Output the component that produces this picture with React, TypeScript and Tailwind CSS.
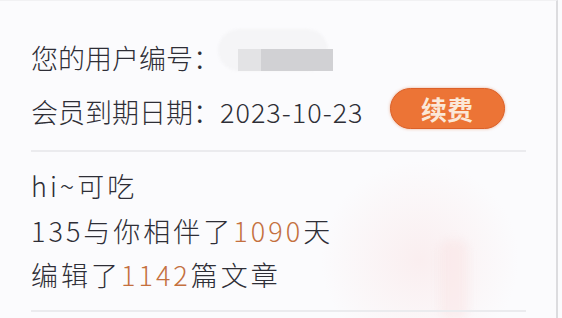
export default function App() {
  const font = { fontFamily: '"Noto Sans CJK SC", "Noto Sans", sans-serif' };
  return (
    <div className="relative w-[562px] h-[318px] overflow-hidden bg-[#fbfbfd]" style={font}>
      <div className="absolute left-[320px] top-[160px] w-[200px] h-[200px] rounded-full bg-[radial-gradient(circle,rgba(248,214,214,0.35)_0%,rgba(250,230,230,0.25)_40%,rgba(251,251,253,0)_70%)]" />
      <div className="absolute left-[440px] top-[240px] w-[28px] h-[80px] rounded-[10px] bg-[rgba(250,220,220,0.35)] blur-[4px]" />
      <div className="relative flex h-full w-[558px] flex-col border-r-2 border-t border-[#dcdcdf] border-t-[#f1f1f3] pl-[31px] pt-[42px] font-light text-[#2e2e36]">
        <div className="flex h-[28px] items-center text-[27px] leading-none">
          <span>您的用户编号：</span>
          <div className="relative top-[3px] ml-[18px] h-[22px] w-[95px]">
            <div className="absolute left-[-20px] top-[-20px] h-[42px] w-[110px] rounded-[21px] bg-[#f5f5f7] blur-[1px]" />
            <div className="absolute left-0 top-0 flex h-[22px] w-[95px]">
              <div className="w-[23px] bg-[#e3e3e5]" />
              <div className="flex-1 bg-[#d1d1d4]" />
            </div>
          </div>
        </div>
        <div className="mt-[19px] flex h-[43px] items-center text-[27px] leading-none">
          <span>会员到期日期：</span>
          <span className="tracking-[1px]">2023-10-23</span>
          <button className="relative -top-[3px] ml-[26px] h-[41px] w-[115px] rounded-full border border-[#dc6129] bg-[#ec7436] text-[26px] font-bold leading-none text-[#fbe8d8] shadow-[0_0_3px_rgba(220,100,40,0.5)]">
            续费
          </button>
        </div>
        <div className="mt-[17px] h-[2px] w-[495px] bg-[#ebebee]" />
        <div className="mt-[20px] h-[28px] text-[27px] leading-[28px] tracking-[3px]">hi~可吃</div>
        <div className="mt-[17px] h-[28px] text-[27px] leading-[28px] tracking-[3px]">
          135与你相伴了<span className="text-[#c4703f]">1090</span>天
        </div>
        <div className="mt-[16px] h-[28px] text-[27px] leading-[28px] tracking-[3px]">
          编辑了<span className="text-[#c4703f]">1142</span>篇文章
        </div>
        <div className="mt-[21px] h-[2px] w-[495px] bg-[#ebebee]" />
      </div>
    </div>
  );
}
